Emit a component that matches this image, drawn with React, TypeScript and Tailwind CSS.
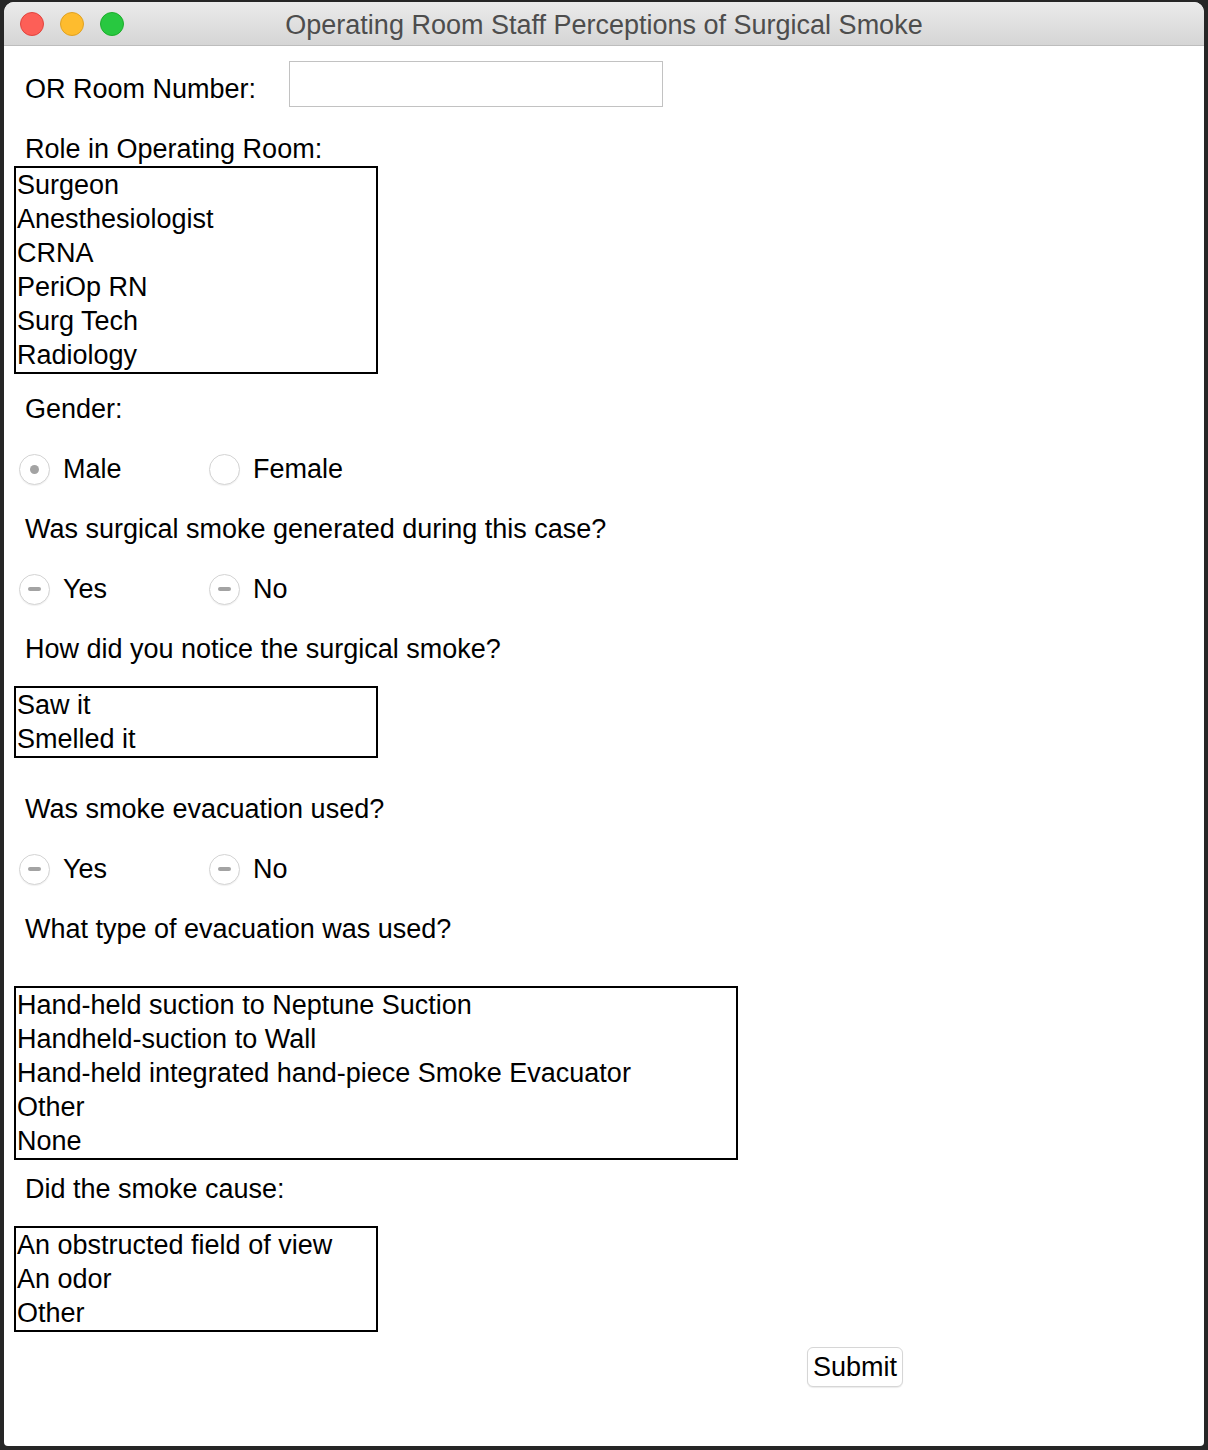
import React from "react";

const font = { fontFamily: '"Liberation Sans", Arial, sans-serif' };

function Label({ children, className = "" }: { children: React.ReactNode; className?: string }) {
  return <div className={`h-[34px] leading-[34px] pl-[11px] text-[27px] text-black ${className}`}>{children}</div>;
}

function ListBox({ items, width, className = "" }: { items: string[]; width: string; className?: string }) {
  return (
    <div className={`border-2 border-black bg-white ${width} ${className}`}>
      {items.map((it) => (
        <div key={it} className="h-[34px] leading-[34px] pl-px text-[27px] text-black whitespace-nowrap">
          {it}
        </div>
      ))}
    </div>
  );
}

function Radio({ label, state }: { label: string; state: "dot" | "empty" | "minus" }) {
  return (
    <div className="w-[190px] flex items-center gap-[13px]">
      <div className="w-[31px] h-[31px] rounded-full border border-[#d4d4d4] bg-white shadow-[0_1px_1px_rgba(0,0,0,0.06)] flex items-center justify-center">
        {state === "dot" && <div className="w-[9px] h-[9px] rounded-full bg-[#a3a3a3]" />}
        {state === "minus" && <div className="w-[13px] h-[4px] rounded-full bg-[#a3a3a3]" />}
      </div>
      <span className="text-[27px] leading-[34px] text-black">{label}</span>
    </div>
  );
}

export default function App() {
  return (
    <div className="w-[1208px] h-[1450px] bg-[#262626] pt-[2px] pl-[4px] overflow-hidden" style={font}>
      <div className="w-[1200px] h-[1444px] bg-white rounded-t-[10px] rounded-b-[4px] overflow-hidden flex flex-col">
        {/* Title bar */}
        <div className="relative h-[44px] shrink-0 bg-gradient-to-b from-[#ebebeb] to-[#d5d5d5] border-b border-[#bdbdbd] flex items-center">
          <div className="flex items-center gap-[16px] pl-[16px]">
            <div className="w-[24px] h-[24px] rounded-full bg-[#fd5f57] border border-[#e0443e]" />
            <div className="w-[24px] h-[24px] rounded-full bg-[#febc2e] border border-[#dfa123]" />
            <div className="w-[24px] h-[24px] rounded-full bg-[#28c840] border border-[#1dad2b]" />
          </div>
          <div className="absolute inset-0 pt-[4px] flex items-center justify-center text-[27px] text-[#4d4d4d] pointer-events-none">
            Operating Room Staff Perceptions of Surgical Smoke
          </div>
        </div>

        {/* Content */}
        <div className="flex flex-col pl-[10px]">
          <div className="flex items-start mt-[15px]">
            <Label className="mt-[11px] w-[275px]">OR Room Number:</Label>
            <div className="w-[374px] h-[46px] border border-[#c2c2c2] bg-white" />
          </div>

          <Label className="mt-[25px]">Role in Operating Room:</Label>
          <ListBox
            width="w-[364px]"
            items={["Surgeon", "Anesthesiologist", "CRNA", "PeriOp RN", "Surg Tech", "Radiology"]}
          />

          <Label className="mt-[18px]">Gender:</Label>
          <div className="flex items-center h-[34px] mt-[26px] pl-[5px]">
            <Radio label="Male" state="dot" />
            <Radio label="Female" state="empty" />
          </div>

          <Label className="mt-[26px]">Was surgical smoke generated during this case?</Label>
          <div className="flex items-center h-[34px] mt-[26px] pl-[5px]">
            <Radio label="Yes" state="minus" />
            <Radio label="No" state="minus" />
          </div>

          <Label className="mt-[26px]">How did you notice the surgical smoke?</Label>
          <ListBox className="mt-[20px]" width="w-[364px]" items={["Saw it", "Smelled it"]} />

          <Label className="mt-[34px]">Was smoke evacuation used?</Label>
          <div className="flex items-center h-[34px] mt-[26px] pl-[5px]">
            <Radio label="Yes" state="minus" />
            <Radio label="No" state="minus" />
          </div>

          <Label className="mt-[26px]">What type of evacuation was used?</Label>
          <ListBox
            className="mt-[40px]"
            width="w-[724px]"
            items={[
              "Hand-held suction to Neptune Suction",
              "Handheld-suction to Wall",
              "Hand-held integrated hand-piece Smoke Evacuator",
              "Other",
              "None",
            ]}
          />

          <Label className="mt-[12px]">Did the smoke cause:</Label>
          <ListBox
            className="mt-[20px]"
            width="w-[364px]"
            items={["An obstructed field of view", "An odor", "Other"]}
          />

          <div className="mt-[15px] pl-[793px]">
            <button className="w-[96px] h-[40px] rounded-[6px] border border-[#d6d6d6] bg-white shadow-[0_1px_1px_rgba(0,0,0,0.08)] text-[27px] leading-[38px] text-black">
              Submit
            </button>
          </div>
        </div>
      </div>
    </div>
  );
}
